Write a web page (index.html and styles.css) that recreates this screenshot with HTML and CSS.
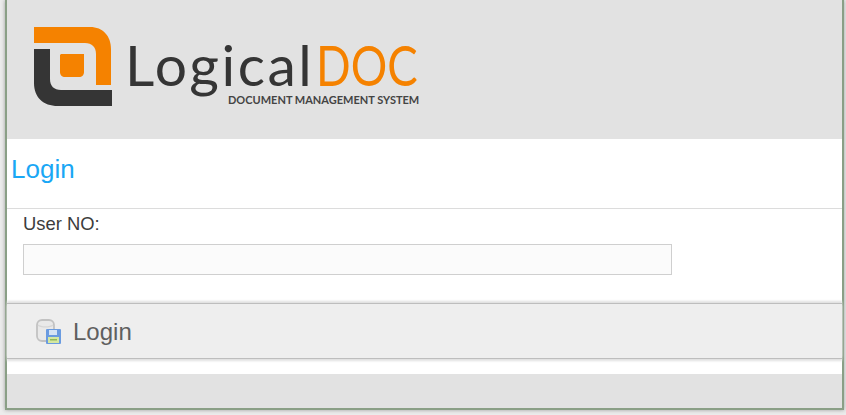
FILE: index.html
```html
<!doctype html>
<html lang="en">

<head>
  <meta charset="UTF-8" />
  <title>LogicalDOC</title>
  <link rel="stylesheet" href="styles.css">
</head>

<body>
  <div class="window">
    <div class="banner">
      <div class="logo">
        <svg class="logo-mark" width="80" height="80" viewBox="0 0 80 80">
          <path fill="#f58200" d="M0 0H56C69 0 77 9 77 22V58H62V27C62 20 58 16 51 16H0Z" />
          <path fill="#f58200" d="M27 27H50V45C50 48 48 50 45 50H31C28 50 26 48 26 45V28Z" />
          <path fill="#353535" d="M0 22H16V52C16 59 20 63 27 63H78V79H24C9 79 0 70 0 56Z" />
        </svg>
        <div class="logo-text">
          <div class="logo-name"><span class="logo-logical">Logical</span><span class="logo-doc">DOC</span></div>
          <div class="logo-sub">DOCUMENT MANAGEMENT SYSTEM</div>
        </div>
      </div>
    </div>

    <h1 class="title">Login</h1>

    <form class="login-form">
      <label class="field-label" for="user-no">User NO:</label>
      <input class="field-input" id="user-no" type="text">
    </form>

    <div class="toolbar">
      <svg class="toolbar-icon" width="26" height="26" viewBox="0 0 26 26">
        <rect x="1" y="1" width="17" height="21" rx="5" fill="#e9e9e9" stroke="#c2c2c2" stroke-width="1.8" />
        <path d="M2 6C5 8.500 14 8.500 17 6" fill="none" stroke="#d6d6d6" stroke-width="1.2" />
        <rect x="10" y="10" width="15" height="15" rx="1" fill="#6a9be0" />
        <rect x="13" y="11" width="8" height="5" fill="#d5e3f5" />
        <rect x="12" y="18" width="11" height="6" fill="#d5e8a0" />
        <rect x="14" y="20" width="7" height="1.500" fill="#8fb85a" />
      </svg>
      <span class="toolbar-label">Login</span>
    </div>

    <div class="gap"></div>
    <div class="footer"></div>
  </div>
</body>

</html>
```

FILE: styles.css
```css
html,
body {
  margin: 0;
  padding: 0;
  height: 415px;
  overflow: hidden;
  background-color: #ececec;
  font-family: "Liberation Sans", Arial, sans-serif;
}

.window {
  box-sizing: border-box;
  width: 839px;
  height: 410px;
  margin-left: 5px;
  border-left: 2px solid #8a9f86;
  border-right: 2px solid #8a9f86;
  border-bottom: 2px solid #8a9f86;
  background-color: #ffffff;
  box-shadow: 0 0 4px #9a9a9a;
  display: flex;
  flex-direction: column;
}

.banner {
  height: 139px;
  background-color: #e2e2e2;
  padding: 27px 0 0 27px;
  box-sizing: border-box;
}

.logo {
  display: flex;
  align-items: flex-start;
  gap: 11px;
}

.logo-text {
  color: #353535;
  font-family: Lato, sans-serif;
}

.logo-name {
  font-size: 57px;
  font-weight: 400;
  line-height: 58px;
  margin-top: 8px;
  white-space: nowrap;
}

.logo-logical {
  letter-spacing: 2.500px;
}

.logo-doc {
  display: inline-block;
  color: #f58200;
  margin-left: 2px;
  transform: scaleX(0.8);
  transform-origin: left center;
}

.logo-sub {
  font-size: 11px;
  font-weight: 700;
  line-height: 11px;
  margin: 1px 0 0 103px;
  color: #444444;
  white-space: nowrap;
}

.title {
  margin: 0;
  height: 70px;
  box-sizing: border-box;
  padding: 16px 0 0 4px;
  border-bottom: 1px solid #dcdcdc;
  color: #1aa7f5;
  font-size: 26px;
  font-weight: 400;
  line-height: 28px;
}

.login-form {
  height: 94px;
  box-sizing: border-box;
  padding: 5px 0 0 16px;
}

.field-label {
  display: block;
  color: #3c3c3c;
  font-size: 18.400px;
  line-height: 19px;
  margin-bottom: 11px;
}

.field-input {
  display: block;
  box-sizing: border-box;
  width: 649px;
  height: 31px;
  padding: 0;
  border: 1px solid #cfcfcf;
  background-color: #fbfbfb;
}

.toolbar {
  height: 56px;
  box-sizing: border-box;
  background-color: #eeeeee;
  border-top: 1px solid #bdbdbd;
  border-bottom: 1px solid #bdbdbd;
  box-shadow: 0 -2px 2px #e0e0e0, 0 2px 2px #e0e0e0;
  padding: 2px 0 0 29px;
  display: flex;
  align-items: center;
  gap: 11px;
}

.toolbar-label {
  color: #5f5f5f;
  font-size: 24px;
}

.gap {
  height: 15px;
}

.footer {
  flex: 1;
  background-color: #e2e2e2;
}
```
